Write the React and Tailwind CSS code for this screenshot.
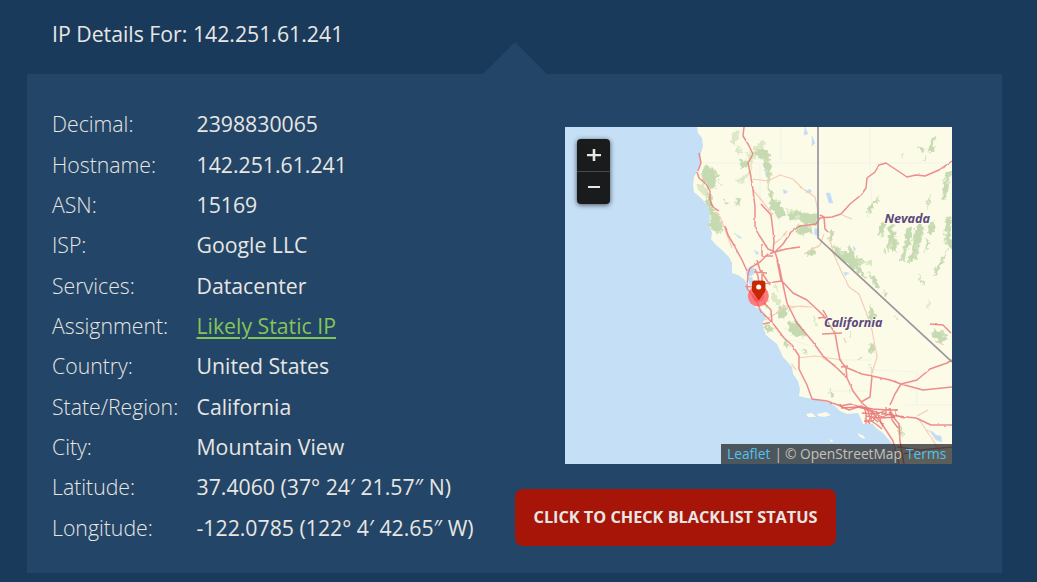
const DETAILS = [
  ["Decimal:", "2398830065"],
  ["Hostname:", "142.251.61.241"],
  ["ASN:", "15169"],
  ["ISP:", "Google LLC"],
  ["Services:", "Datacenter"],
  ["Assignment:", "Likely Static IP", true],
  ["Country:", "United States"],
  ["State/Region:", "California"],
  ["City:", "Mountain View"],
  ["Latitude:", "37.4060 (37° 24′ 21.57″ N)"],
  ["Longitude:", "-122.0785 (122° 4′ 42.65″ W)"],
];

const LAND =
  "M697 127L698 133L702 138L703 146L700 156L701 163L698 170L694 177L693 185L694 192L702 199L708 207L710 217L709 225L712 233L711 239L716 245L722 250L729 257L732 263L732 273L738 275L745 280L748 287L748 299L755 307L762 310L767 316L763 322L763 327L766 335L772 340L777 344L783 357L792 367L793 374L798 381L800 389L799 396L807 398L815 399L830 403L835 406L840 411L847 414L858 413L861 419L863 424L873 424L876 428L883 433L889 440L895 447L898 464H952V127Z";

const FORESTS = [
  "M706 166L712 167L719 176L714 181L717 187L711 189L704 182L700 176L701 170Z",
  "M706 190L712 196L711 207L717 213L722 222L723 231L716 232L710 227L710 215L707 204Z",
  "M739 160L748 160L747 166L742 168Z",
  "M755 151L763 148L770 155L767 161L758 158Z",
  "M763 158L769 161L771 170L769 184L773 196L783 208L785 215L779 218L771 211L769 195L767 178Z",
  "M738 197L741 197L740 203L735 204Z",
  "M723 201L729 202L727 205Z",
  "M787 214L797 210L804 213L817 214L818 225L806 224L799 220L788 219Z",
  "M798 224L810 227L812 232L803 235L795 233L799 229Z",
  "M807 252L816 248L815 255L809 256Z",
  "M830 229L834 232L832 241L829 241Z",
  "M834 245L841 250L847 253L850 244L856 258L867 262L858 265L867 278L861 276L850 264L842 261L835 253Z",
  "M867 271L881 286L876 289Z",
  "M931 138L935 136L934 150L929 153L930 145Z",
  "M917 146L924 149L923 152Z",
  "M924 157L926 157L925 161Z",
  "M867 209L880 195L877 202L871 209L869 215Z",
  "M880 224L885 222L882 236L879 235Z",
  "M889 226L894 223L894 235L897 240L896 251L891 250L892 242L886 254L888 239Z",
  "M906 229L912 228L909 245L905 260L900 260L905 246Z",
  "M915 226L920 223L924 228L920 244L917 260L914 259L918 244L912 262L908 263L912 248Z",
  "M932 220L935 226L931 235L928 233Z",
  "M927 239L930 244L924 252Z",
  "M947 172L951 171L945 200L941 199Z",
  "M946 219L951 216L951 248L945 243Z",
  "M948 248L944 260L934 277L935 270Z",
  "M918 275L923 282L922 285Z",
  "M927 204L930 193L928 210Z",
  "M780 306L788 308L787 315L781 319L777 312Z",
  "M789 322L797 322L803 328L805 336L796 337L788 331Z",
  "M764 326L774 328L773 332L766 332Z",
  "M785 340L791 346L787 348L783 343Z",
  "M803 348L808 353L804 353Z",
  "M871 304L876 316L873 325L869 318Z",
  "M870 343L875 345L873 353L869 351Z",
  "M884 291L888 294L885 296Z",
  "M933 328L944 333L947 340L939 342L933 335Z",
  "M829 390L834 395L832 396Z",
  "M899 423L903 436L900 434Z",
];

const LIGHT_FORESTS = [
  "M696 184L703 184L709 192L705 196L699 192Z",
  "M733 132L739 130L737 138L735 147L731 140Z",
  "M735 146L742 150L739 155L736 151Z",
  "M754 146L763 142L766 150L758 150L752 164L749 158Z",
  "M773 292L780 301L777 307L770 298Z",
  "M763 303L768 306L765 309Z",
  "M849 389L852 391L849 393Z",
  "M896 314L898 322L895 319Z",
];

const LAKES = [
  "M805 127L808 134L804 135Z",
  "M812 136L815 143L812 146Z",
  "M806 191L810 189L812 192L806 193Z",
  "M783 189L788 192L784 194Z",
  "M826 193L830 193L833 203L829 203Z",
  "M815 228L819 229L819 237L814 234Z",
  "M853 246L856 249L854 251Z",
  "M844 272L849 273L845 276Z",
  "M748 268L754 268L754 274L749 277L746 273Z",
  "M748 278L752 277L755 286L762 294L758 294L750 285Z",
  "M734 233L742 238L739 238Z",
  "M765 169L768 171L766 173Z",
  "M929 430L933 432L936 435L941 436L942 442L936 440Z",
  "M754 250L759 253L757 255Z",
];

const HIGHWAYS = [
  "M744 127L743 136L748 144L753 154L748 163L751 177L753 190L755 207L755 228L759 235L768 249L775 252L779 265L782 280L787 303L797 323L813 342L823 356L838 369L847 378L853 391L862 403L871 411L882 424L893 441L899 464",
  "M773 252L774 241L773 231L771 215L761 204",
  "M777 260L781 280L793 293L807 300L823 315L835 333L838 350L840 360L846 368L847 378",
  "M748 274L750 268L760 262L768 254L775 252L783 244L791 232L800 226L816 224L820 218L832 217L841 214L850 204L861 195L866 188L867 178L875 172L879 165L886 163L895 169L907 177L916 175L925 176L939 170L952 161",
  "M775 252L786 249L800 247",
  "M820 215L824 217L825 229L828 232",
  "M762 244L762 256L773 256",
  "M748 274L747 288L757 302L761 312L768 318L775 326L784 338L792 345L799 356L799 369L803 377L807 385L812 399L827 401L838 405L849 410L861 406L869 411",
  "M745 286L753 287L759 284L782 281",
  "M755 269L758 276L759 284",
  "M762 270L762 282",
  "M754 272L767 273",
  "M757 260L760 270L770 285",
  "M697 172L699 178L706 184L710 191L710 200L713 207L719 211",
  "M699 153L701 163L698 171",
  "M725 226L728 235L735 247L742 260L747 271",
  "M764 303L771 310L772 322L763 324",
  "M845 367L862 374L872 376L890 380L901 384L923 390L952 387",
  "M901 384L917 380L930 369L947 363L952 360",
  "M901 384L895 394L890 405",
  "M872 376L870 397L861 402",
  "M862 407L879 413L897 416L916 418L931 425L952 425",
  "M889 412L899 424L900 441L904 464",
  "M822 334L842 333",
  "M823 310L827 317L818 318",
  "M841 367L848 366",
  "M930 324L943 325L951 333",
  "M897 447L920 450L952 447",
  "M900 454L925 451",
];

const METRO = [
  "M840 406L851 404L861 407L873 409L887 410L898 410",
  "M841 408L858 407L866 409L882 417L890 414",
  "M864 407L866 413L866 424",
  "M868 410L870 418L868 423",
  "M872 411L871 421L876 424L882 429",
  "M862 413L877 414L889 409L895 418",
  "M866 416L880 418L895 417",
  "M864 421L873 421L877 414",
  "M876 411L880 419L883 427",
  "M881 414L886 413L886 407",
  "M890 408L892 420L898 428",
  "M872 417L878 422L884 424",
  "M896 409L896 415L903 418",
  "M865 418L870 424",
];

const MINOR_ROADS = [
  "M752 179L768 181L780 175L793 179L802 188L815 197L819 216",
  "M753 190L763 202L773 215",
  "M715 209L721 219L732 248",
  "M829 237L834 255L843 275L849 287L859 294L866 312L872 330L877 357L871 376",
  "M798 358L806 357L815 356L829 358L842 360",
  "M765 320L777 313L785 306L812 307",
  "M823 358L836 366",
  "M804 254L820 245L824 234",
  "M842 215L852 219",
  "M774 244L780 239L787 231",
  "M790 308L800 306L811 307",
  "M791 363L796 370",
  "M844 338L846 343",
  "M917 416L928 410",
  "M918 418L928 433L940 451",
  "M858 360L862 357",
  "M935 341L944 345",
];

function MapDrawing() {
  return (
    <svg viewBox="565 127 387 337" className="block h-full w-full" fill="none">
      <defs>
        <filter id="rough" x="-5%" y="-5%" width="110%" height="110%" colorInterpolationFilters="sRGB">
          <feTurbulence type="fractalNoise" baseFrequency="0.22" numOctaves="2" seed="4" result="n" />
          <feDisplacementMap in="SourceGraphic" in2="n" scale="8" xChannelSelector="R" yChannelSelector="G" />
          <feGaussianBlur stdDeviation="0.6" />
        </filter>
        <filter id="wobble" x="-5%" y="-5%" width="110%" height="110%" colorInterpolationFilters="sRGB">
          <feTurbulence type="fractalNoise" baseFrequency="0.12" numOctaves="2" seed="9" result="n" />
          <feDisplacementMap in="SourceGraphic" in2="n" scale="2" xChannelSelector="R" yChannelSelector="G" />
          <feGaussianBlur stdDeviation="0.35" />
        </filter>
      </defs>
      <path d="M565 127H952V464H565Z" fill="#c5dff6" />
      <path d={LAND} fill="#fcfbe7" />
      <path
        d="M806 414L812 413L816 417L808 417ZM817 414L826 412L831 415L824 417L818 416ZM857 433L864 436L865 439L860 437ZM829 439L834 441L831 442Z"
        fill="#fcfbe7"
      />
      <path
        d="M703 163H818M781 127V163M760 163V205M870 127V163L872 210M818 163H952M780 200L779 230M790 340L826 350M840 360H872M829 391H870M870 370L917 372M917 372V405M905 405H952"
        stroke="#eef3ea"
        strokeWidth="0.8"
      />
      <g filter="url(#rough)">
        <path d={LIGHT_FORESTS.join("")} fill="#dce8c6" />
        <path d={FORESTS.join("")} fill="#c5dab0" stroke="#d3e2bf" strokeWidth="0.8" />
        <path
          d="M748 151L752 170L743 180L736 181M763 141L760 148M719 180L723 186M786 208L794 213M792 220L800 216M762 298L769 302M775 285L779 291M850 336L852 332M839 247L842 254M858 262L872 264M904 153L902 158M941 180L947 176M928 300L929 308M814 317L817 326M870 365L873 374"
          stroke="#dbe8c5"
          strokeWidth="2"
        />
      </g>
      <path d={LAKES.join("")} fill="#c2dcf8" stroke="#d0e4f4" strokeWidth="0.6" />
      <g filter="url(#wobble)" strokeLinejoin="round">
        <path d={MINOR_ROADS.join("")} stroke="#f6cdb8" strokeWidth="1.2" />
        <path d={HIGHWAYS.join("")} stroke="#ea7a7b" strokeOpacity="0.85" strokeWidth="1.5" />
        <path d={METRO.join("")} stroke="#e87878" strokeOpacity="0.9" strokeWidth="1.3" />
      </g>
      <path d="M818 127V238L952 362" stroke="#9b969b" strokeWidth="1.7" />
      <g
        fill="#5c4a7c"
        stroke="#fcfbe7"
        strokeWidth="1.5"
        paintOrder="stroke"
        className="font-['Noto_Sans',sans-serif] text-[13px] font-bold italic"
      >
        <text x="884.500" y="223.300" textLength="45.500" lengthAdjust="spacingAndGlyphs">Nevada</text>
        <text x="824" y="326.700" textLength="58.500" lengthAdjust="spacingAndGlyphs">California</text>
      </g>
      <circle cx="758.300" cy="296" r="10.500" fill="#ff4b55" fillOpacity="0.72" />
      <circle cx="758.300" cy="296" r="6" fill="#f4282f" fillOpacity="0.3" />
      <path
        d="M754 281H763Q765 281 765 283V290Q765 292 763 293.500L758.700 300L754.500 293.500Q752.500 292 752.500 290V283Q752.500 281 754 281Z"
        fill="#cb2800"
        stroke="#a32508"
        strokeWidth="0.8"
      />
      <circle cx="758.700" cy="287" r="2.500" fill="#fff" />
    </svg>
  );
}

function ZoomControl() {
  return (
    <div className="absolute left-3 top-3 flex w-[33px] flex-col overflow-hidden rounded-[4px] bg-[#1a1b1d] shadow-[0_1px_5px_rgba(0,0,0,0.65)]">
      <button aria-label="Zoom in" className="flex h-8 items-center justify-center pl-px">
        <svg viewBox="0 0 14 14" className="h-3.5 w-3.5">
          <path d="M5.7 1h2.600v5H14v2.200H8.300V13H5.700V8.200H0V6h5.700z" fill="#e8e6e1" />
        </svg>
      </button>
      <button aria-label="Zoom out" className="flex h-[33px] items-center justify-center border-t border-[#46484b] pb-1 pl-px">
        <svg viewBox="0 0 14 14" className="h-3.5 w-3.5">
          <path d="M1 7h12v2H1z" fill="#e8e6e1" />
        </svg>
      </button>
    </div>
  );
}

export default function App() {
  return (
    <div className="flex h-[582px] w-[1037px] flex-col overflow-hidden bg-[#1a3a5c] font-['Open_Sans',sans-serif] text-[#e8e6e3]">
      <header className="h-[74px] shrink-0 pl-[52px] pt-[19px]">
        <h1 className="text-[21.25px] leading-[30px]">IP Details For: 142.251.61.241</h1>
      </header>
      <main className="relative ml-[27px] flex h-[499px] w-[975px] shrink-0 bg-[#234567] pl-[25px]">
        <svg viewBox="0 0 64 32" className="absolute -top-8 left-[456px] h-8 w-16">
          <path d="M0 32L32 0L64 32Z" fill="#234567" />
        </svg>
        <dl className="w-[463px] shrink-0 pt-[30.2px] text-[21.25px] leading-[40.35px]">
          {DETAILS.map(([label, value, linked]) => (
            <div key={label} className="flex h-[40.35px] whitespace-nowrap">
              <dt className="w-[144.5px] shrink-0 font-light">{label}</dt>
              <dd>
                {linked ? (
                  <a className="text-[#83c556] underline decoration-[1.5px] underline-offset-[3px]">{value}</a>
                ) : (
                  value
                )}
              </dd>
            </div>
          ))}
        </dl>
        <section className="flex flex-col items-start pt-[53px]">
          <div className="relative ml-[50px] h-[337px] w-[387px] overflow-hidden">
            <MapDrawing />
            <ZoomControl />
            <div className="absolute bottom-0 right-0 flex h-5 w-[231px] items-center whitespace-nowrap bg-[#1a1b1d]/70 pl-1.5 text-[13.8px] text-[#c5c1b9]">
              <a className="text-[#4fc3f0]">Leaflet</a>
              <span className="ml-1">|</span>
              <span className="ml-[3px] tracking-[-0.04px]">© OpenStreetMap</span>
              <a className="ml-1 text-[#4fc3f0]">Terms</a>
            </div>
          </div>
          <button className="mt-[25px] flex h-[57px] w-[321px] items-center justify-center whitespace-nowrap rounded-lg bg-[#a71408] pb-px text-[16.25px] font-bold">
            CLICK TO CHECK BLACKLIST STATUS
          </button>
        </section>
      </main>
    </div>
  );
}
